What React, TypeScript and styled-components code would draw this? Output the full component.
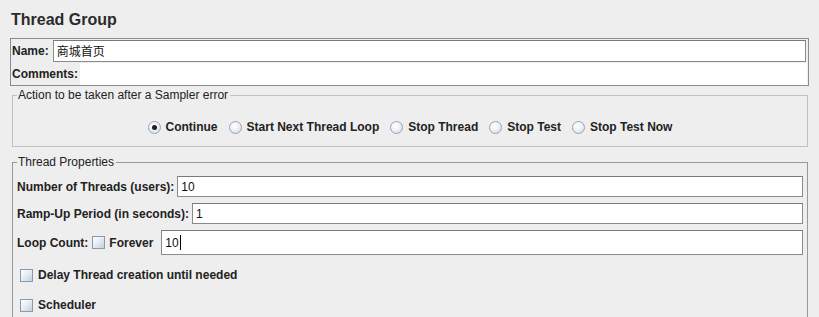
import React from "react";
import styled, { createGlobalStyle } from "styled-components";

const Global = createGlobalStyle`
  html, body { margin: 0; padding: 0; background: #eeeeee; }
  body { font-family: "Liberation Sans", Arial, "Noto Sans CJK SC", sans-serif; }
  * { box-sizing: border-box; }
`;

const Page = styled.div`
  width: 819px;
  height: 317px;
  overflow: hidden;
  background: #eeeeee;
  padding-top: 10px;
  color: #222;
  font-size: 12px;
`;

const Title = styled.h1`
  margin: 0 0 0 11px;
  font-size: 16px;
  line-height: 20px;
  font-weight: bold;
  color: #2b2b2b;
`;

const NameBox = styled.div`
  margin: 8px 10px 0 10px;
  border: 1px solid #8c8c8c;
  padding: 0 1px 0 1px;
  display: flex;
  flex-direction: column;
`;

const Row = styled.div<{ $h: number; $gap?: number; $mt?: number }>`
  display: flex;
  align-items: center;
  height: ${(p) => p.$h}px;
  gap: ${(p) => p.$gap ?? 3}px;
  margin-top: ${(p) => p.$mt ?? 0}px;
`;

const Label = styled.span`
  font-weight: bold;
  font-size: 12px;
  white-space: nowrap;
  color: #222;
`;

const Field = styled.div<{ $h: number; $flat?: boolean; $mr?: number }>`
  flex: 1;
  height: ${(p) => p.$h}px;
  background: #ffffff;
  border: ${(p) => (p.$flat ? "none" : "1px solid #8a8a8a")};
  border-top-color: #7a7a7a;
  margin-right: ${(p) => p.$mr ?? 0}px;
  display: flex;
  align-items: center;
  padding-left: 3px;
  font-size: 12px;
  color: #111;
  font-family: "Liberation Sans", Arial, "Noto Sans CJK SC", sans-serif;
`;

const Caret = styled.span`
  display: inline-block;
  width: 1px;
  height: 15px;
  background: #000;
  margin-left: 1px;
`;

const Fieldset = styled.fieldset<{ $mt: number; $border: string; $pb: number }>`
  margin: ${(p) => p.$mt}px 11px 0 12px;
  border: 1px solid ${(p) => p.$border};
  padding: 0 4px ${(p) => p.$pb}px 4px;
  min-width: 0;
`;

const Legend = styled.legend`
  font-size: 12px;
  line-height: 14px;
  padding: 0 2px 0 1px;
  margin-left: 0;
  color: #222;
`;

const RadioRow = styled.div`
  display: flex;
  justify-content: center;
  align-items: center;
  height: 20px;
  margin-top: 15px;
  gap: 11px;
`;

const Option = styled.label`
  display: flex;
  align-items: center;
  gap: 5px;
  font-weight: bold;
  font-size: 12px;
  white-space: nowrap;
  color: #222;
`;

const RadioDot = styled.span<{ $on?: boolean }>`
  width: 13px;
  height: 13px;
  border-radius: 50%;
  border: 1px solid #98a4b2;
  background: radial-gradient(circle at 40% 35%, #ffffff 0%, #eef2f6 45%, #c9d3de 100%);
  display: flex;
  align-items: center;
  justify-content: center;
  &::after {
    content: "";
    display: ${(p) => (p.$on ? "block" : "none")};
    width: 5px;
    height: 5px;
    border-radius: 50%;
    background: #1e1e1e;
  }
`;

const Box = styled.span`
  width: 13px;
  height: 13px;
  border: 1px solid #8999ae;
  background: linear-gradient(135deg, #ffffff 0%, #e6ecf2 50%, #c3cfdc 100%);
  flex: none;
`;

const Check = styled.label<{ $mt?: number }>`
  display: flex;
  align-items: center;
  gap: 5px;
  height: 22px;
  padding-left: 3px;
  margin-top: ${(p) => p.$mt ?? 0}px;
  font-weight: bold;
  font-size: 12px;
  white-space: nowrap;
  color: #222;
`;

const InlineCheck = styled.span`
  display: flex;
  align-items: center;
  gap: 4px;
  font-weight: bold;
  font-size: 12px;
  margin-left: 1px;
  margin-right: 5px;
`;

const options = ["Continue", "Start Next Thread Loop", "Stop Thread", "Stop Test", "Stop Test Now"];

export default function App() {
  return (
    <>
      <Global />
      <Page>
        <Title>Thread Group</Title>
        <NameBox>
          <Row $h={23} $gap={4}>
            <Label>Name:</Label>
            <Field $h={22} $mr={1}>商城首页</Field>
          </Row>
          <Row $h={23} $gap={2}>
            <Label>Comments:</Label>
            <Field $h={22} $flat />
          </Row>
        </NameBox>
        <Fieldset $mt={2} $border="#b9c1c9" $pb={9}>
          <Legend>Action to be taken after a Sampler error</Legend>
          <RadioRow>
            {options.map((o, i) => (
              <Option key={o}>
                <RadioDot $on={i === 0} />
                {o}
              </Option>
            ))}
          </RadioRow>
        </Fieldset>
        <Fieldset $mt={8} $border="#999999" $pb={20}>
          <Legend>Thread Properties</Legend>
          <Row $h={21} $mt={7}>
            <Label>Number of Threads (users):</Label>
            <Field $h={21}>10</Field>
          </Row>
          <Row $h={21} $mt={6}>
            <Label>Ramp-Up Period (in seconds):</Label>
            <Field $h={21}>1</Field>
          </Row>
          <Row $h={25} $mt={6}>
            <Label>Loop Count:</Label>
            <InlineCheck>
              <Box />
              Forever
            </InlineCheck>
            <Field $h={25}>
              10
              <Caret />
            </Field>
          </Row>
          <Check $mt={9}>
            <Box />
            Delay Thread creation until needed
          </Check>
          <Check $mt={8}>
            <Box />
            Scheduler
          </Check>
        </Fieldset>
      </Page>
    </>
  );
}
